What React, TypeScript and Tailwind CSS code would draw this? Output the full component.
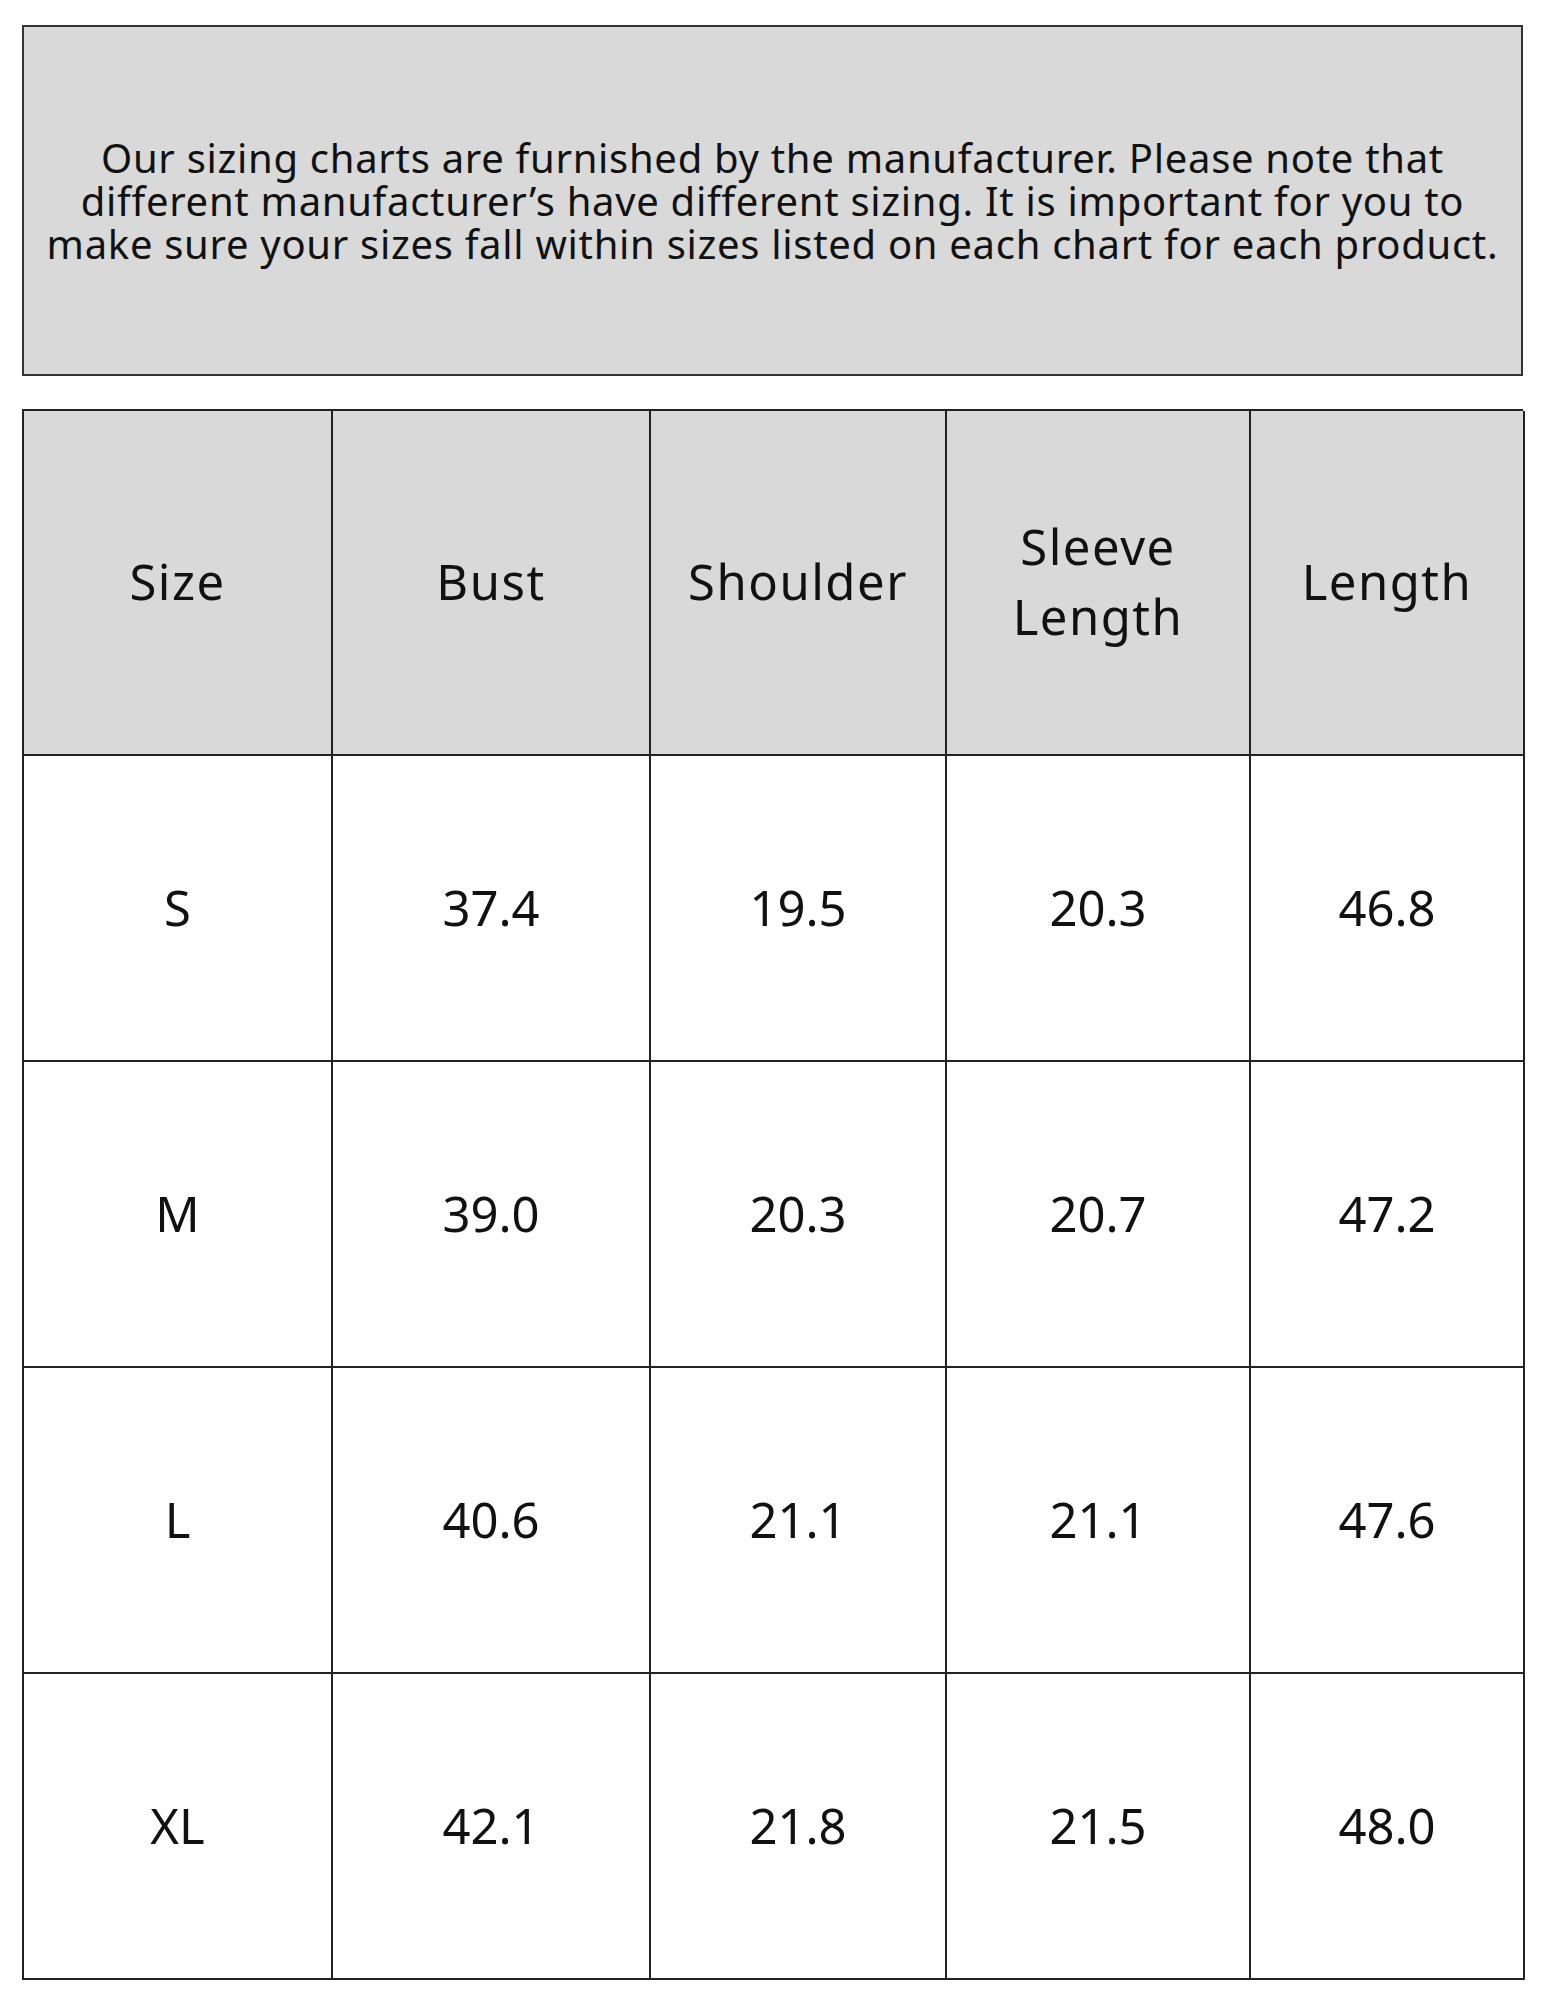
const headers = ['Size', 'Bust', 'Shoulder', 'Sleeve Length', 'Length'];

const rows = [
  ['S', '37.4', '19.5', '20.3', '46.8'],
  ['M', '39.0', '20.3', '20.7', '47.2'],
  ['L', '40.6', '21.1', '21.1', '47.6'],
  ['XL', '42.1', '21.8', '21.5', '48.0'],
];

export default function App() {
  return (
    <div className="min-h-[2000px] w-[1545px] bg-white px-[22px] pt-[25px] text-[#111] font-['Noto_Sans',sans-serif]">
      <div className="flex h-[351px] w-[1501px] items-center justify-center border-2 border-[#333] bg-[#d9d9d9] px-2">
        <p className="text-center text-[40px] leading-[43px] tracking-[0.7px] whitespace-nowrap">
          Our sizing charts are furnished by the manufacturer. Please note that
          <br />
          different manufacturer’s have different sizing. It is important for you to
          <br />
          make sure your sizes fall within sizes listed on each chart for each product.
        </p>
      </div>

      <div className="mt-[33px] grid w-[1501px] grid-cols-[309px_318px_296px_304px_274px] border-l-2 border-t-2 border-[#222]">
        {headers.map((h) => (
          <div
            key={h}
            className="flex h-[345px] items-center justify-center border-b-2 border-r-2 border-[#222] bg-[#d9d9d9] px-4 pb-[3px] text-center text-[49px] leading-[70px] tracking-[1.5px]"
          >
            {h === 'Sleeve Length' ? (
              <span>
                Sleeve
                <br />
                Length
              </span>
            ) : (
              h
            )}
          </div>
        ))}
        {rows.map((r) =>
          r.map((v, i) => (
            <div
              key={r[0] + i}
              className="flex h-[306px] items-center justify-center border-b-2 border-r-2 border-[#222] bg-white text-[49px]"
            >
              {v}
            </div>
          ))
        )}
      </div>
    </div>
  );
}
